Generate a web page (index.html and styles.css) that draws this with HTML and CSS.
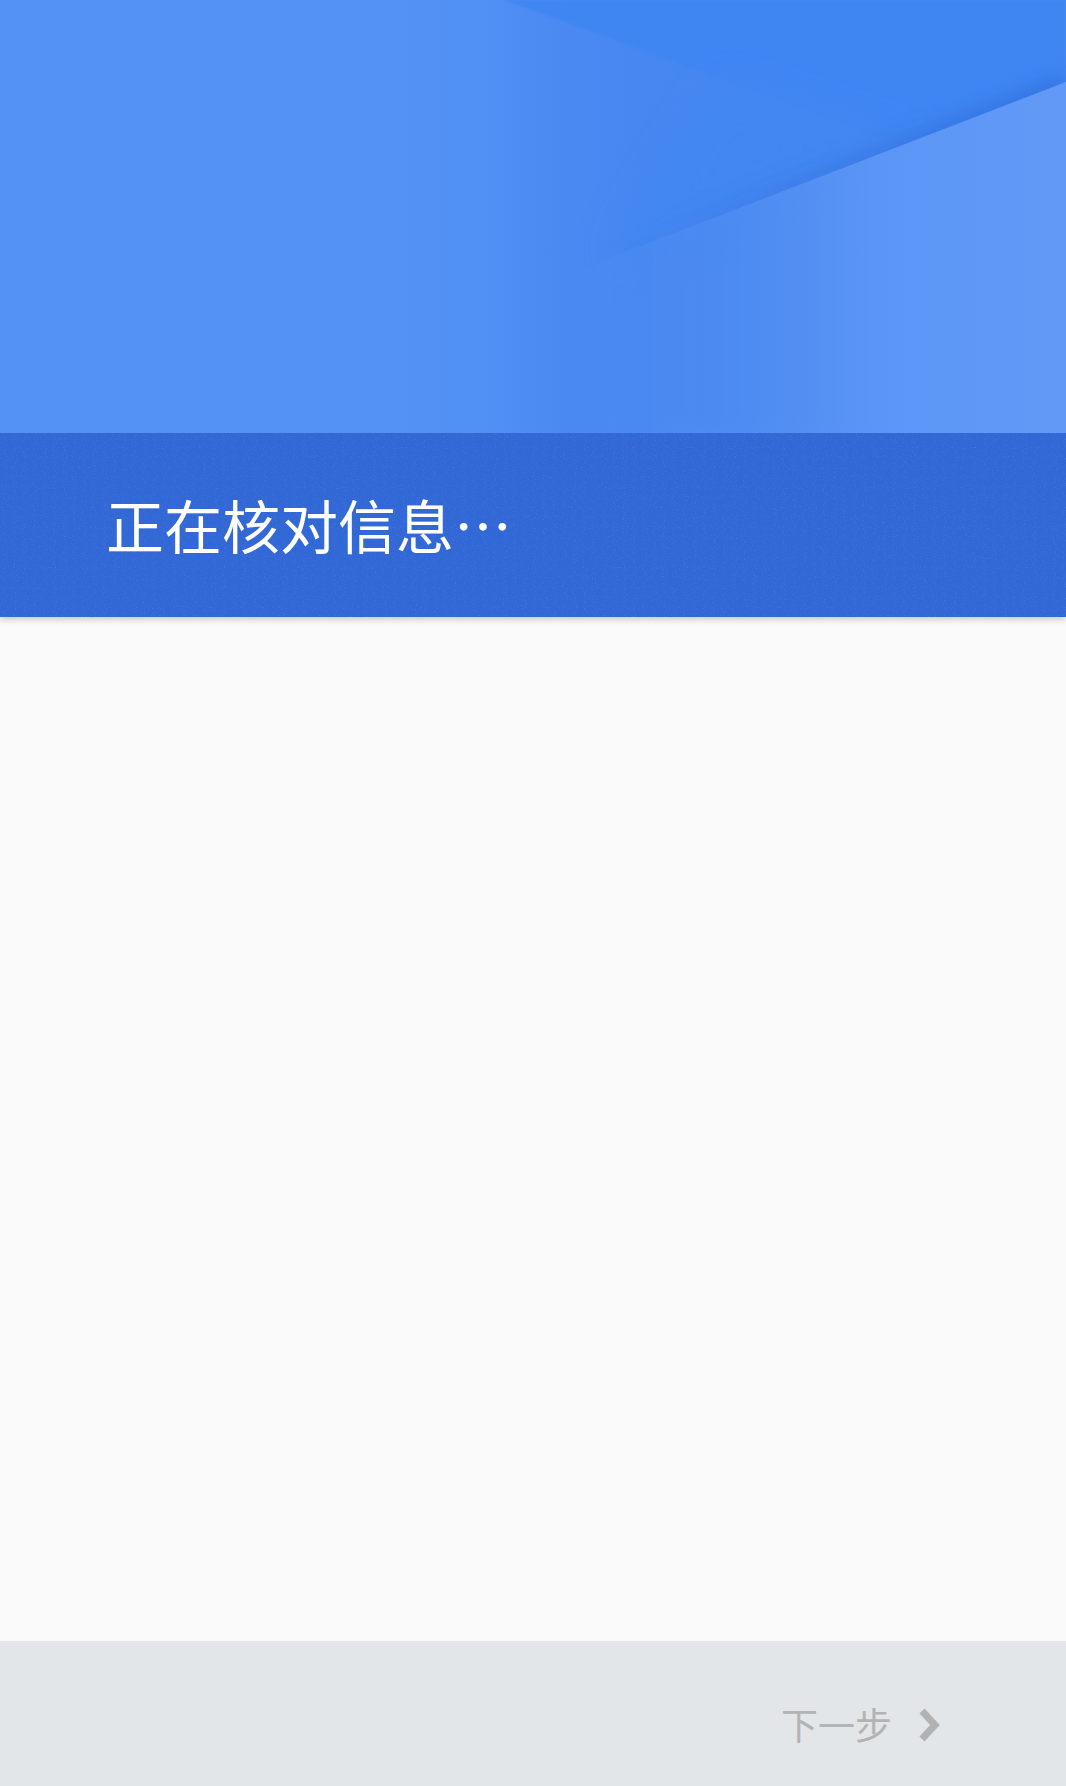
FILE: index.html
```html
<!DOCTYPE html>
<html lang="zh-CN">
<head>
<meta charset="utf-8">
<title>正在核对信息</title>
<link rel="stylesheet" href="styles.css">
</head>
<body>
<div class="page">
  <header class="hero">
    <div class="art">
      <svg class="art-svg" viewBox="0 0 1066 433" preserveAspectRatio="none" aria-hidden="true">
        <defs>
          <linearGradient id="base" x1="0" y1="0" x2="1066" y2="0" gradientUnits="userSpaceOnUse">
            <stop offset="0" stop-color="#5592F5"/>
            <stop offset="0.33" stop-color="#5592F5"/>
            <stop offset="0.45" stop-color="#5190F4"/>
            <stop offset="0.53" stop-color="#4B89F2"/>
            <stop offset="0.6" stop-color="#4787F1"/>
            <stop offset="1" stop-color="#4787F1"/>
          </linearGradient>
          <linearGradient id="shade" x1="600" y1="0" x2="1066" y2="0" gradientUnits="userSpaceOnUse">
            <stop offset="0" stop-color="#2C68D6" stop-opacity="0"/>
            <stop offset="0.5" stop-color="#2C68D6" stop-opacity="0.35"/>
            <stop offset="1" stop-color="#2C68D6" stop-opacity="0.55"/>
          </linearGradient>
          <linearGradient id="light" x1="560" y1="0" x2="1066" y2="0" gradientUnits="userSpaceOnUse">
            <stop offset="0" stop-color="#5A95F5" stop-opacity="0"/>
            <stop offset="0.3" stop-color="#5592F5" stop-opacity="0.5"/>
            <stop offset="0.62" stop-color="#5B96F6" stop-opacity="1"/>
            <stop offset="1" stop-color="#6299F7" stop-opacity="1"/>
          </linearGradient>
          <filter id="blur" x="-20%" y="-20%" width="140%" height="140%">
            <feGaussianBlur stdDeviation="9"/>
          </filter>
          <filter id="wide" x="-50%" y="-50%" width="200%" height="200%">
            <feGaussianBlur stdDeviation="20"/>
          </filter>
          <filter id="soft" x="-5%" y="-5%" width="110%" height="110%">
            <feGaussianBlur stdDeviation="1.2"/>
          </filter>
        </defs>
        <rect x="0" y="0" width="1066" height="433" fill="url(#base)"/>
        <polygon points="505,0 1066,0 1066,82 900,146 745,88" fill="#4086F3" filter="url(#soft)"/>
        <polygon points="720,80 920,145 610,262 660,170" fill="#4287F3" opacity="0.9" filter="url(#wide)"/>
        <polygon points="600,252 1066,72 1066,433 600,433" fill="url(#shade)" filter="url(#blur)"/>
        <polygon points="560,277 1066,82 1066,433 560,433" fill="url(#light)"/>
      </svg>
    </div>
    <div class="band">
      <svg class="grain" aria-hidden="true">
        <filter id="noise">
          <feTurbulence type="fractalNoise" baseFrequency="0.9" numOctaves="1" seed="4"/>
          <feColorMatrix values="0 0 0 0 0.75  0 0 0 0 0.85  0 0 0 0 1  1.6 0 0 0 -0.9"/>
        </filter>
        <rect width="100%" height="100%" filter="url(#noise)"/>
      </svg>
      <h1 class="title">正在核对信息…</h1>
    </div>
  </header>
  <main class="content"></main>
  <footer class="nav">
    <button class="next" type="button">
      <span class="next-label">下一步</span>
      <svg class="chev" viewBox="0 0 24 36" aria-hidden="true">
        <polyline points="4,4 17,18 4,32" fill="none" stroke="currentColor" stroke-width="7"/>
      </svg>
    </button>
  </footer>
</div>
</body>
</html>
```
FILE: styles.css
```css
* { box-sizing: border-box; }
html, body { margin: 0; padding: 0; }
body {
  background: #FAFAFA;
  font-family: "Noto Sans CJK SC", "Noto Sans", "Liberation Sans", sans-serif;
}
.page {
  width: 1066px;
  height: 1786px;
  display: flex;
  flex-direction: column;
  overflow: hidden;
}
.hero {
  flex: none;
  position: relative;
  z-index: 1;
  box-shadow: 0 2px 7px rgba(0, 0, 0, 0.22);
}
.art { height: 433px; }
.art-svg { display: block; width: 100%; height: 433px; }
.band {
  position: relative;
  height: 184px;
  background: #3268D6;
  display: flex;
  align-items: center;
  padding-left: 106px;
}
.grain {
  position: absolute;
  inset: 0;
  width: 100%;
  height: 100%;
  opacity: 0.25;
  pointer-events: none;
}
.title {
  position: relative;
  margin: 0;
  color: #FFFFFF;
  font-size: 58px;
  font-weight: 400;
  line-height: 1;
  padding-bottom: 2px;
}
.content { flex: 1; background: #FAFAFA; }
.nav {
  flex: none;
  height: 145px;
  background: #E2E6E9;
  display: flex;
  justify-content: flex-end;
  align-items: center;
  padding-right: 124px;
  padding-top: 22px;
}
.next {
  display: flex;
  align-items: center;
  gap: 26px;
  border: 0;
  background: none;
  padding: 0;
  color: #B0B0B0;
  font-family: inherit;
}
.next-label { font-size: 37px; line-height: 1; color: #B3B3B3; }
.chev { display: block; width: 24px; height: 36px; color: #B2B2B2; }
```
